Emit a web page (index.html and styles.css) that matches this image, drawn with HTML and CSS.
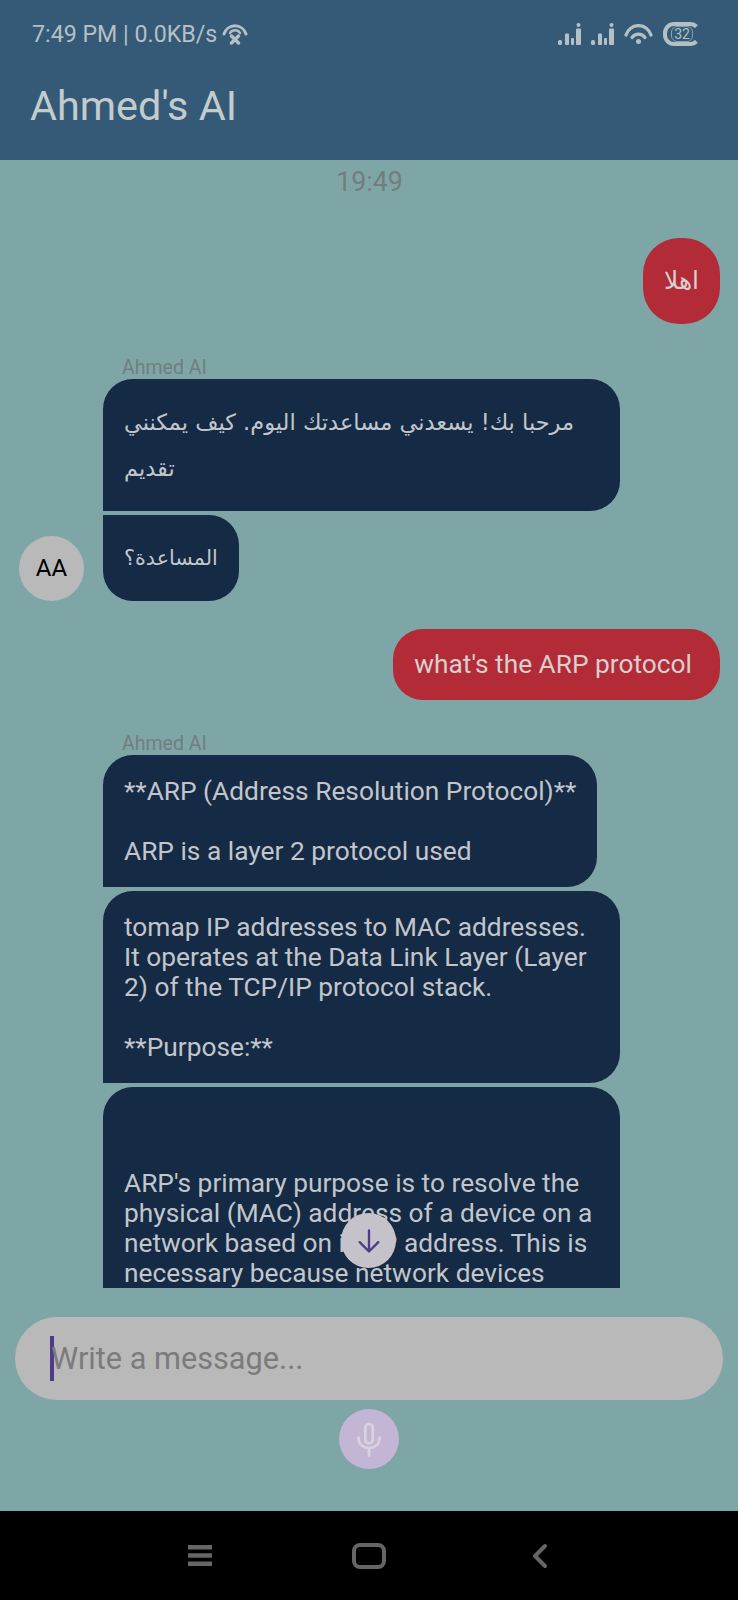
FILE: index.html
```html
<!DOCTYPE html>
<html lang="en">
<head>
  <meta charset="UTF-8" />
  <meta name="viewport" content="width=device-width, initial-scale=1" />
  <title>Ahmed's AI</title>
  <link rel="stylesheet" href="styles.css">
</head>
<body>

  <div class="screen">
    <header class="app-header">
      <div class="status-bar">
        <div class="status-left">
          <span>7:49 PM | 0.0KB/s</span>
          <svg viewBox="0 0 26 22" width="26" height="22" fill="none" stroke="#b5c0c4" stroke-linecap="round">
            <path d="M2 11 A11.5 11.5 0 0 1 24 11" stroke-width="3"/>
            <path d="M8 10 A6 6 0 0 1 18 10" stroke-width="2.4"/>
            <path d="M9.5 13 L16.5 20 M16.5 13 L9.5 20" stroke-width="3.4"/>
          </svg>
        </div>
        <div class="status-right">
          <svg viewBox="0 0 23 22" width="23" height="22" fill="#b5c0c4">
            <rect x="0" y="17" width="4" height="5" rx="1.6"/>
            <rect x="7" y="10.5" width="4" height="11.5" rx="1"/>
            <rect x="13" y="15" width="3" height="7" rx="1"/>
            <rect x="18" y="5.5" width="5" height="16.5" rx="1"/>
            <circle cx="20.5" cy="2" r="2"/>
          </svg>
          <svg viewBox="0 0 23 22" width="23" height="22" fill="#b5c0c4">
            <rect x="0" y="17" width="4" height="5" rx="1.6"/>
            <rect x="7" y="10.5" width="4" height="11.5" rx="1"/>
            <rect x="13" y="15" width="3" height="7" rx="1"/>
            <rect x="18" y="5.5" width="5" height="16.5" rx="1"/>
            <circle cx="20.5" cy="2" r="2"/>
          </svg>
          <svg viewBox="0 0 29 20" width="29" height="20" fill="none" stroke="#b5c0c4" stroke-width="3.2" stroke-linecap="round">
            <path d="M2 11 A13 13 0 0 1 27 11"/>
            <path d="M8 13.5 A8 8 0 0 1 21 13.5"/>
            <circle cx="14.5" cy="17.5" r="2.5" fill="#b5c0c4" stroke="none"/>
          </svg>
          <div class="battery"><span class="battery-level">32</span></div>
        </div>
      </div>
      <h1 class="app-title">Ahmed's AI</h1>
    </header>

    <main class="chat">
      <div class="chat-time">19:49</div>

      <div class="row row-out">
        <div class="bubble bubble-out bubble-ar">اهلا</div>
      </div>

      <div class="group">
        <div class="avatar">AA</div>
        <div class="group-body">
          <div class="sender">Ahmed AI</div>
          <div class="bubble bubble-in bubble-ar bubble-wide">مرحبا بك! يسعدني مساعدتك اليوم. كيف يمكنني تقديم</div>
          <div class="bubble bubble-in bubble-ar bubble-last">المساعدة؟</div>
        </div>
      </div>

      <div class="row row-out">
        <div class="bubble bubble-out">what's the ARP protocol</div>
      </div>

      <div class="group">
        <div class="group-body">
          <div class="sender">Ahmed AI</div>
          <div class="bubble bubble-in bubble-mid">**ARP (Address Resolution Protocol)**<br><br>ARP is a layer 2 protocol used</div>
          <div class="bubble bubble-in bubble-wide">tomap IP addresses to MAC addresses. It operates at the Data Link Layer (Layer 2) of the TCP/IP protocol stack.<br><br>**Purpose:**</div>
          <div class="bubble bubble-in bubble-wide bubble-cut"><br><br>ARP's primary purpose is to resolve the physical (MAC) address of a device on a network based on its IP address. This is necessary because network devices</div>
        </div>
      </div>

      <button class="scroll-down" type="button" aria-label="Scroll to bottom">
        <svg viewBox="0 0 24 24" width="28" height="28" fill="none" stroke="#4f3a8c" stroke-width="2" stroke-linecap="round" stroke-linejoin="round">
          <path d="M12 3 V21 M4 13 L12 21 L20 13"/>
        </svg>
      </button>
    </main>

    <section class="composer">
      <div class="message-box">
        <span class="caret"></span>
        <span class="placeholder">Write a message...</span>
      </div>
      <button class="mic" type="button" aria-label="Voice input">
        <svg viewBox="0 0 24 24" width="36" height="36" fill="none" stroke="#d8d3e0" stroke-width="1.8" stroke-linecap="round">
          <rect x="9.5" y="2" width="5" height="13" rx="2.5"/>
          <path d="M5 11 C5 16 8.5 18 12 18 C15.5 18 19 16 19 11 M12 18 V23"/>
        </svg>
      </button>
    </section>

    <nav class="nav-bar">
      <svg viewBox="0 0 24 21" width="24" height="21" fill="none" stroke="#666" stroke-width="4.4">
        <path d="M0 2.2 H24 M0 10.5 H24 M0 18.8 H24"/>
      </svg>
      <svg viewBox="0 0 34 26" width="34" height="26" fill="none" stroke="#666" stroke-width="4">
        <rect x="2" y="2" width="30" height="22" rx="6"/>
      </svg>
      <svg class="nav-back" viewBox="0 0 16 26" width="16" height="26" fill="none" stroke="#666" stroke-width="4" stroke-linecap="round" stroke-linejoin="round">
        <path d="M13 3 L3 13 L13 23"/>
      </svg>
    </nav>
  </div>

</body>
</html>
```

FILE: styles.css
```css
* {
  box-sizing: border-box;
}

body {
  margin: 0;
  background: #000;
  font-family: Roboto, sans-serif;
}

.screen {
  width: 738px;
  height: 1600px;
  display: flex;
  flex-direction: column;
  background: #7fa6a7;
}

/* header */
.app-header {
  height: 160px;
  flex: none;
  padding: 18px 32px 0 30px;
  background: #355a78;
  color: #c3cccc;
}

.status-bar {
  display: flex;
  justify-content: space-between;
  align-items: center;
  height: 32px;
  padding-left: 2px;
}

.status-left {
  display: flex;
  align-items: center;
  gap: 5px;
  font-size: 23.2px;
  color: #b5c0c4;
}

.status-right {
  display: flex;
  align-items: center;
  gap: 10px;
  margin-right: 5px;
}

.battery {
  width: 38px;
  height: 24px;
  display: flex;
  align-items: center;
  padding-left: 4px;
  border: 4px solid #b5c0c4;
  border-right-color: transparent;
  border-radius: 11px;
}

.battery-level {
  width: 22px;
  height: 16px;
  border: 1px solid #86a0ac;
  border-radius: 6px;
  font-size: 14px;
  line-height: 14px;
  text-align: center;
  color: #b5c0c4;
}

.app-title {
  margin: 32px 0 0;
  font-size: 41.4px;
  font-weight: 400;
  line-height: 48px;
}

/* chat */
.chat {
  position: relative;
  height: 1128px;
  flex: none;
  overflow: hidden;
  padding: 0 18px 0 19px;
}

.chat-time {
  margin-top: 7px;
  font-size: 26.8px;
  line-height: 30px;
  text-align: center;
  color: #717e7f;
}

.row {
  display: flex;
}

.row-out {
  justify-content: flex-end;
}

.row-out:nth-child(2) {
  margin-top: 41px;
}

.row-out:nth-child(4) {
  margin-top: 28px;
}

.group {
  position: relative;
  display: flex;
  align-items: flex-end;
  padding-left: 84px;
  margin-top: 33px;
}

.avatar {
  position: absolute;
  left: 0;
  bottom: 0;
  width: 65px;
  height: 65px;
  border-radius: 50%;
  background: #b9b9b9;
  font-size: 24px;
  line-height: 65px;
  text-align: center;
  color: #000;
}

.group-body {
  width: 517px;
}

.sender {
  margin-left: 19px;
  font-size: 19.5px;
  line-height: 22px;
  color: #717e7f;
}

.bubble {
  padding: 21px;
  border-radius: 30px;
  font-size: 26.3px;
  line-height: 30px;
}

.bubble-out {
  padding: 20px 28px 20px 21px;
  background: #b32b37;
  color: #d9cfcf;
  line-height: 31px;
}

.bubble-in {
  margin-bottom: 4px;
  background: #152a45;
  color: #c2c6ca;
  border-bottom-left-radius: 0;
}

.bubble-ar {
  padding: 20px 21px;
  font-family: "DejaVu Sans", sans-serif;
  font-size: 22.5px;
  line-height: 46px;
}

.bubble-out.bubble-ar {
  width: 77px;
  padding: 20px 0 20px 21px;
  border-radius: 36px;
  font-size: 25px;
}

.bubble-wide {
  width: 517px;
}

.bubble-mid {
  width: 494px;
  padding-right: 10px;
}

.bubble-last {
  width: 136px;
  margin-bottom: 0;
  font-size: 20.7px;
  border-radius: 0 30px 30px 30px;
}

.bubble-cut {
  padding-bottom: 60px;
}

/* scroll button sits over the messages */
.scroll-down {
  position: absolute;
  left: 341px;
  top: 1053px;
  width: 55px;
  height: 55px;
  display: flex;
  align-items: center;
  justify-content: center;
  padding: 0;
  border: none;
  border-radius: 50%;
  background: #c6c2c9;
}

/* composer */
.composer {
  flex: 1;
  display: flex;
  flex-direction: column;
  align-items: center;
  padding: 29px 15px 0;
}

.message-box {
  width: 100%;
  height: 83px;
  display: flex;
  align-items: center;
  padding-left: 35px;
  border-radius: 42px;
  background: #b9b9b9;
}

.caret {
  width: 4px;
  height: 45px;
  flex: none;
  background: #4f3a8c;
}

.placeholder {
  margin-left: -3px;
  font-size: 30.7px;
  color: #7b7b7b;
}

.mic {
  width: 60px;
  height: 60px;
  display: flex;
  align-items: center;
  justify-content: center;
  margin-top: 9px;
  padding: 0;
  border: none;
  border-radius: 50%;
  background: #c3b6d4;
}

/* android nav */
.nav-bar {
  height: 89px;
  flex: none;
  display: flex;
  align-items: center;
  justify-content: center;
  gap: 140px;
  padding-right: 2px;
  background: #000;
}

.nav-back {
  margin-left: 6px;
}
```
